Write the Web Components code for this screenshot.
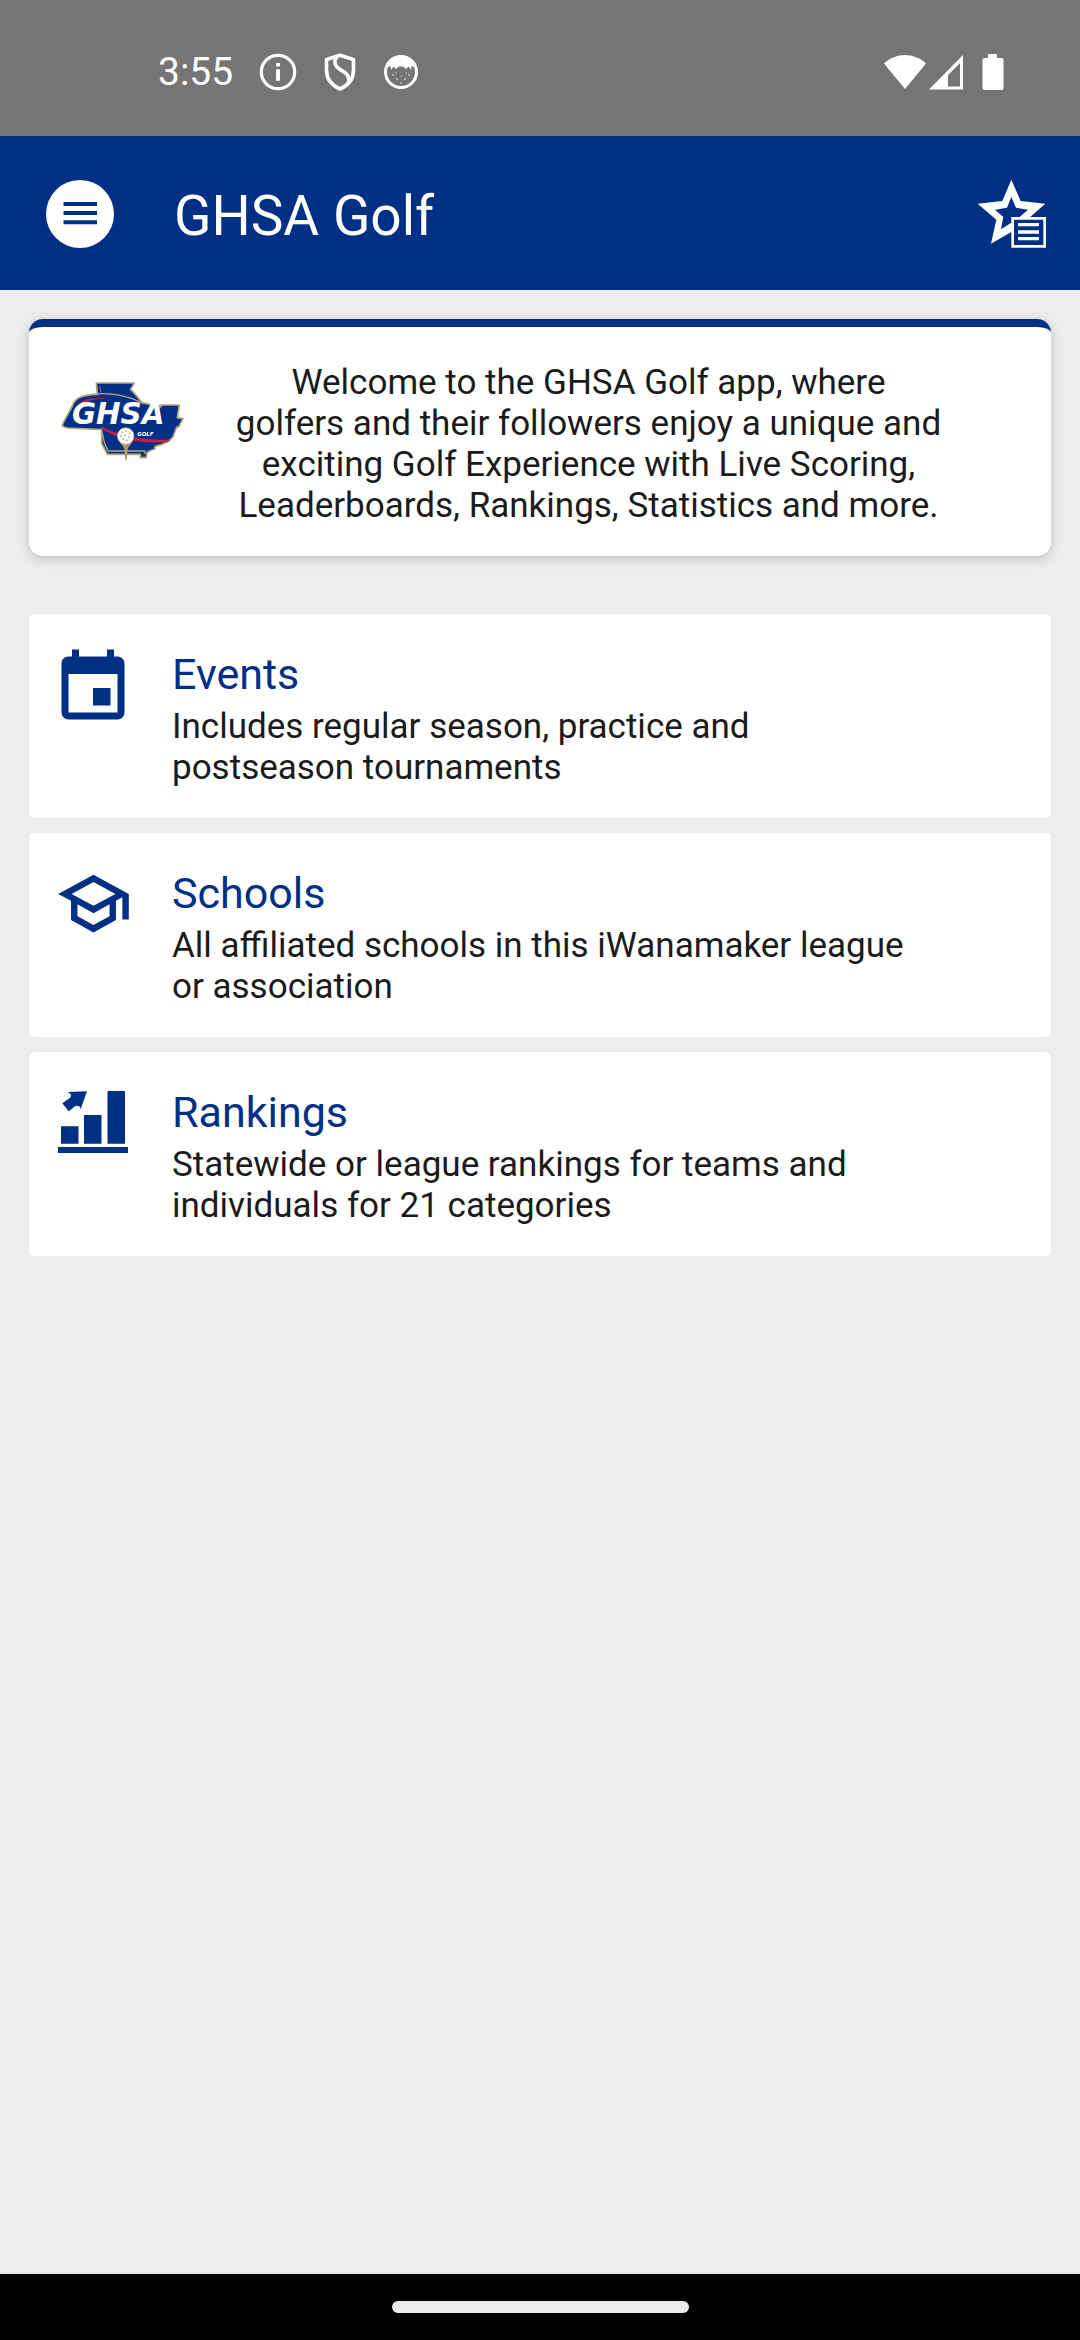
<!DOCTYPE html>
<html lang="en">
<head>
<meta charset="utf-8">
<meta name="viewport" content="width=device-width, initial-scale=1">
<title>GHSA Golf</title>
<style>
  :root {
    --brand: #002f86;
    --ink: #1b1b1b;
    --page: #ededed;
  }
  body {
    margin: 0;
    font-family: Roboto, "Noto Sans", sans-serif;
    color: var(--ink);
    background: var(--page);
  }
</style>
</head>
<body>
<golf-app></golf-app>

<script>
class StatusBar extends HTMLElement {
  constructor() {
    super();
    this.attachShadow({ mode: 'open' });
    this.shadowRoot.innerHTML = `
      <style>
        :host {
          display: flex;
          align-items: center;
          justify-content: space-between;
          box-sizing: border-box;
          height: 136px;
          padding: 7px 76px 0 158px;
          background: #757575;
          color: #fff;
        }
        div { display: flex; align-items: center; }
        .left { gap: 26px; }
        time { font-size: 39px; line-height: 46px; }
        svg { display: block; }
        .battery { margin-left: 18px; }
      </style>
      <div class="left">
        <time>3:55</time>
        <svg width="38" height="38" viewBox="0 0 38 38" fill="none" stroke="#fff">
          <circle cx="19" cy="19" r="16.7" stroke-width="3.2"/>
          <path d="M19 10v3.6M19 16.3v11.4" stroke-width="4"/>
        </svg>
        <svg width="34" height="38" viewBox="0 0 34 38" fill="none" stroke="#fff" stroke-width="3.6" stroke-linejoin="round">
          <path d="M17 2.300L30.500 6.500V17C30.500 26 25 32.500 17 36C9 32.500 3.500 26 3.500 17V6.500Z"/>
          <path d="M14 3.500C10 9 12 13 17 16.500C23 20 27 22 25.500 30"/>
        </svg>
        <svg width="36" height="36" viewBox="0 0 36 36">
          <circle cx="18" cy="18" r="15.500" fill="none" stroke="#fff" stroke-width="3"/>
          <path d="M3 14C5 5 10 2 18 2S31 5 33 14L28 12L28.500 16L25.500 12.500L23 15L20 12.500H16L13 15L10.500 12.500L8 16L7.500 12Z" fill="#fff"/>
          <g fill="#fff">
            <circle cx="10" cy="21" r=".8"/><circle cx="14" cy="25" r=".8"/><circle cx="18" cy="22" r=".6"/>
            <circle cx="22" cy="25" r=".8"/><circle cx="26" cy="21" r=".8"/><circle cx="18" cy="29" r=".8"/>
            <circle cx="13" cy="19" r=".6"/><circle cx="23" cy="19" r=".6"/>
          </g>
        </svg>
      </div>
      <div>
        <svg width="42" height="36" viewBox="0 0 42 36" fill="#fff">
          <path d="M21 35L0 9.500C12 -2 30 -2 42 9.500Z"/>
        </svg>
        <svg width="38" height="36" viewBox="0 0 38 36" fill="#fff">
          <path fill-rule="evenodd" d="M37 1V35.500H3ZM34 9L22 21V32.500H34Z"/>
        </svg>
        <svg class="battery" width="22" height="36" viewBox="0 0 22 36" fill="#fff">
          <path d="M6 0H15V4H20Q21.500 4 21.500 6V34Q21.500 36 19.500 36H2.500Q.5 36 .5 34V6Q.5 4 2.500 4H6Z"/>
        </svg>
      </div>
    `;
  }
}
customElements.define('status-bar', StatusBar);

class AppBar extends HTMLElement {
  constructor() {
    super();
    this.attachShadow({ mode: 'open' });
    this.shadowRoot.innerHTML = `
      <style>
        :host {
          display: flex;
          align-items: center;
          box-sizing: border-box;
          height: 154px;
          padding: 2px 32px 0 46px;
          background: var(--brand);
          color: #fff;
        }
        button {
          display: block;
          padding: 0;
          border: 0;
          background: none;
          cursor: pointer;
        }
        .menu {
          width: 68px;
          height: 68px;
          border-radius: 50%;
          background: #fff;
        }
        h1 {
          flex: 1;
          margin: 0 0 0 60px;
          padding-top: 4px;
          font-size: 55px;
          line-height: 64px;
          font-weight: 400;
        }
        svg { display: block; }
      </style>
      <button class="menu" aria-label="Menu">
        <svg width="68" height="68" viewBox="0 0 68 68" fill="#002f86">
          <path d="M17.500 22h33.500v4h-33.500zM17.500 31h33.500v4h-33.500zM17.500 40.300h33.500v4h-33.500z"/>
        </svg>
      </button>
      <h1><slot></slot></h1>
      <button aria-label="Favorites">
        <svg width="72" height="72" viewBox="75 83 216 216">
          <path fill="#fff" fill-rule="evenodd" d="M181 88L209 152L283 160L228 208L240 280L181 245L120 280L136 208L80 160L154 152ZM181 140L168 172L132 178L157 200L150 237L181 217L212 237L206 200L231 178L195 172Z"/>
          <path fill="#002f86" stroke="#fff" stroke-width="8" d="M185 204H281V288H185Z"/>
          <path fill="#fff" d="M201 218h63v10h-63zM201 240h63v10h-63zM201 260h63v10h-63z"/>
        </svg>
      </button>
    `;
  }
}
customElements.define('app-bar', AppBar);

class GhsaLogo extends HTMLElement {
  constructor() {
    super();
    this.attachShadow({ mode: 'open' });
    this.shadowRoot.innerHTML = `
      <style>
        :host { display: block; }
        svg { display: block; width: 125px; height: 82px; }
        text {
          font-family: "DejaVu Sans", sans-serif;
          font-weight: 700;
          font-style: italic;
          fill: #fff;
        }
      </style>
      <svg viewBox="120 240 375 246" role="img" aria-label="GHSA Golf">
        <!-- state outline -->
        <path fill="#042f87" stroke="#b5a878" stroke-width="5" stroke-linejoin="round"
          d="M229 249H343L332 268L345 282L367 308C385 313 405 317 416 317L426 315H478L472 353L489 356L476 381H470L459 411C450 423 430 434 405 439V447L390 452L381 458L379 473H361V463H262L245 430V389L146 384Q120 382 130 368L157 318C165 290 195 284 232 283Z"/>
        <path fill="none" stroke="#b5a878" stroke-width="4" d="M210 284C270 274 330 289 368 310M246 395L254 431L265 453H375V462M410 331L427 316"/>
        <path fill="none" stroke="#b5a878" stroke-width="2" d="M239 258L243 278"/>
        <!-- red swooshes -->
        <path fill="#c4203f" d="M174 318C178 300 210 288 278 298C225 294 194 302 188 315Z"/>
        <path fill="#c4203f" d="M243 377C290 405 350 420 448 419C450 423 442 427 430 427C345 430 285 414 247 387Z"/>
        <text x="156" y="372" font-size="88">GHSA</text>
        <text x="352" y="407" font-size="16">GOLF</text>
        <!-- ball on tee -->
        <path fill="#b39b6b" d="M296 423Q318 440 340 423L324 443L320 480H316L312 443Z"/>
        <circle cx="317" cy="408" r="25" fill="#fff" stroke="#a99f85" stroke-width="2"/>
        <g fill="#bbb5a8">
          <circle cx="306" cy="397" r="3"/><circle cx="318" cy="394" r="3"/><circle cx="329" cy="400" r="3"/>
          <circle cx="303" cy="409" r="3"/><circle cx="315" cy="406" r="3"/><circle cx="327" cy="412" r="3"/>
          <circle cx="310" cy="418" r="3"/><circle cx="321" cy="421" r="3"/>
        </g>
      </svg>
    `;
  }
}
customElements.define('ghsa-logo', GhsaLogo);

class WelcomeCard extends HTMLElement {
  constructor() {
    super();
    this.attachShadow({ mode: 'open' });
    this.shadowRoot.innerHTML = `
      <style>
        :host {
          display: flex;
          align-items: flex-start;
          padding: 35px 59px 30px 31px;
          border-top: 8px solid var(--brand);
          border-radius: 14px;
          background: #fff;
          box-shadow: 0 3px 12px rgba(0, 0, 0, .2);
        }
        ghsa-logo { margin-top: 18px; }
        p {
          flex: 1;
          margin: 0;
          font-size: 35px;
          line-height: 41px;
          text-align: center;
        }
      </style>
      <ghsa-logo></ghsa-logo>
      <p><slot></slot></p>
    `;
  }
}
customElements.define('welcome-card', WelcomeCard);

const ICONS = {
  events: '<svg width="84" height="84" viewBox="0 0 24 24"><path d="M19 19H5V8H19M16 1V3H8V1H6V3H5C3.890 3 3 3.890 3 5V19A2 2 0 0 0 5 21H19A2 2 0 0 0 21 19V5C21 3.890 20.100 3 19 3H18V1M17 12H12V17H17V12Z"/></svg>',
  schools: '<svg width="77" height="77" viewBox="0 0 24 24"><path d="M12 3L1 9L5 11.180V17.180L12 21L19 17.180V11.180L21 10.090V17H23V9L12 3M18.820 9L12 12.720L5.180 9L12 5.280L18.820 9M17 16L12 18.720L7 16V12.270L12 15L17 12.270V16Z"/></svg>',
  rankings: '<svg width="84" height="84" viewBox="0 0 84 84"><path d="M7 63h70v6H7zM10 42.300h17.500v17.400H10zM33 31h17.500v28.700H33zM56.500 7H74v52.700H56.500zM36 7.300L17 8L20 10.500L19.500 13.500L11.300 19.300L17.700 27.300L24.700 21.700L28.300 22.300L29.700 25Z"/></svg>'
};

class MenuItem extends HTMLElement {
  constructor() {
    super();
    this.attachShadow({ mode: 'open' });
  }

  connectedCallback() {
    this.shadowRoot.innerHTML = `
      <style>
        :host { display: block; }
        a {
          display: flex;
          align-items: flex-start;
          gap: 37px;
          padding: 32px 125px 30px 22px;
          border-radius: 5px;
          background: #fff;
          color: inherit;
          text-decoration: none;
        }
        .icon {
          display: flex;
          justify-content: center;
          flex: none;
          width: 84px;
          fill: var(--brand);
        }
        h2 {
          margin: 2px 0 0;
          font-size: 43px;
          line-height: 52px;
          font-weight: 400;
          color: var(--brand);
        }
        p {
          margin: 6px 0 0;
          font-size: 35px;
          line-height: 41px;
        }
      </style>
      <a href="#${this.getAttribute('icon')}">
        <span class="icon">${ICONS[this.getAttribute('icon')]}</span>
        <div>
          <h2><slot name="title"></slot></h2>
          <p><slot></slot></p>
        </div>
      </a>
    `;
  }
}
customElements.define('menu-item', MenuItem);

class GestureBar extends HTMLElement {
  constructor() {
    super();
    this.attachShadow({ mode: 'open' });
    this.shadowRoot.innerHTML = `
      <style>
        :host {
          display: flex;
          align-items: center;
          justify-content: center;
          height: 66px;
          background: #000;
        }
        span {
          width: 297px;
          height: 12px;
          border-radius: 6px;
          background: #ebebeb;
        }
      </style>
      <span></span>
    `;
  }
}
customElements.define('gesture-bar', GestureBar);

class GolfApp extends HTMLElement {
  constructor() {
    super();
    this.attachShadow({ mode: 'open' });
    this.shadowRoot.innerHTML = `
      <style>
        :host {
          display: flex;
          flex-direction: column;
          min-height: 100vh;
        }
        main {
          flex: 1;
          padding: 29px;
        }
        nav {
          display: flex;
          flex-direction: column;
          gap: 15px;
          margin-top: 58px;
        }
      </style>
      <status-bar></status-bar>
      <app-bar>GHSA Golf</app-bar>
      <main>
        <welcome-card>Welcome to the GHSA Golf app, where<br>golfers and their followers enjoy a unique and<br>exciting Golf Experience with Live Scoring,<br>Leaderboards, Rankings, Statistics and more.</welcome-card>
        <nav>
          <menu-item icon="events"><span slot="title">Events</span>Includes regular season, practice and postseason tournaments</menu-item>
          <menu-item icon="schools"><span slot="title">Schools</span>All affiliated schools in this iWanamaker league or association</menu-item>
          <menu-item icon="rankings"><span slot="title">Rankings</span>Statewide or league rankings for teams and individuals for 21 categories</menu-item>
        </nav>
      </main>
      <gesture-bar></gesture-bar>
    `;
  }
}
customElements.define('golf-app', GolfApp);
</script>
</body>
</html>
